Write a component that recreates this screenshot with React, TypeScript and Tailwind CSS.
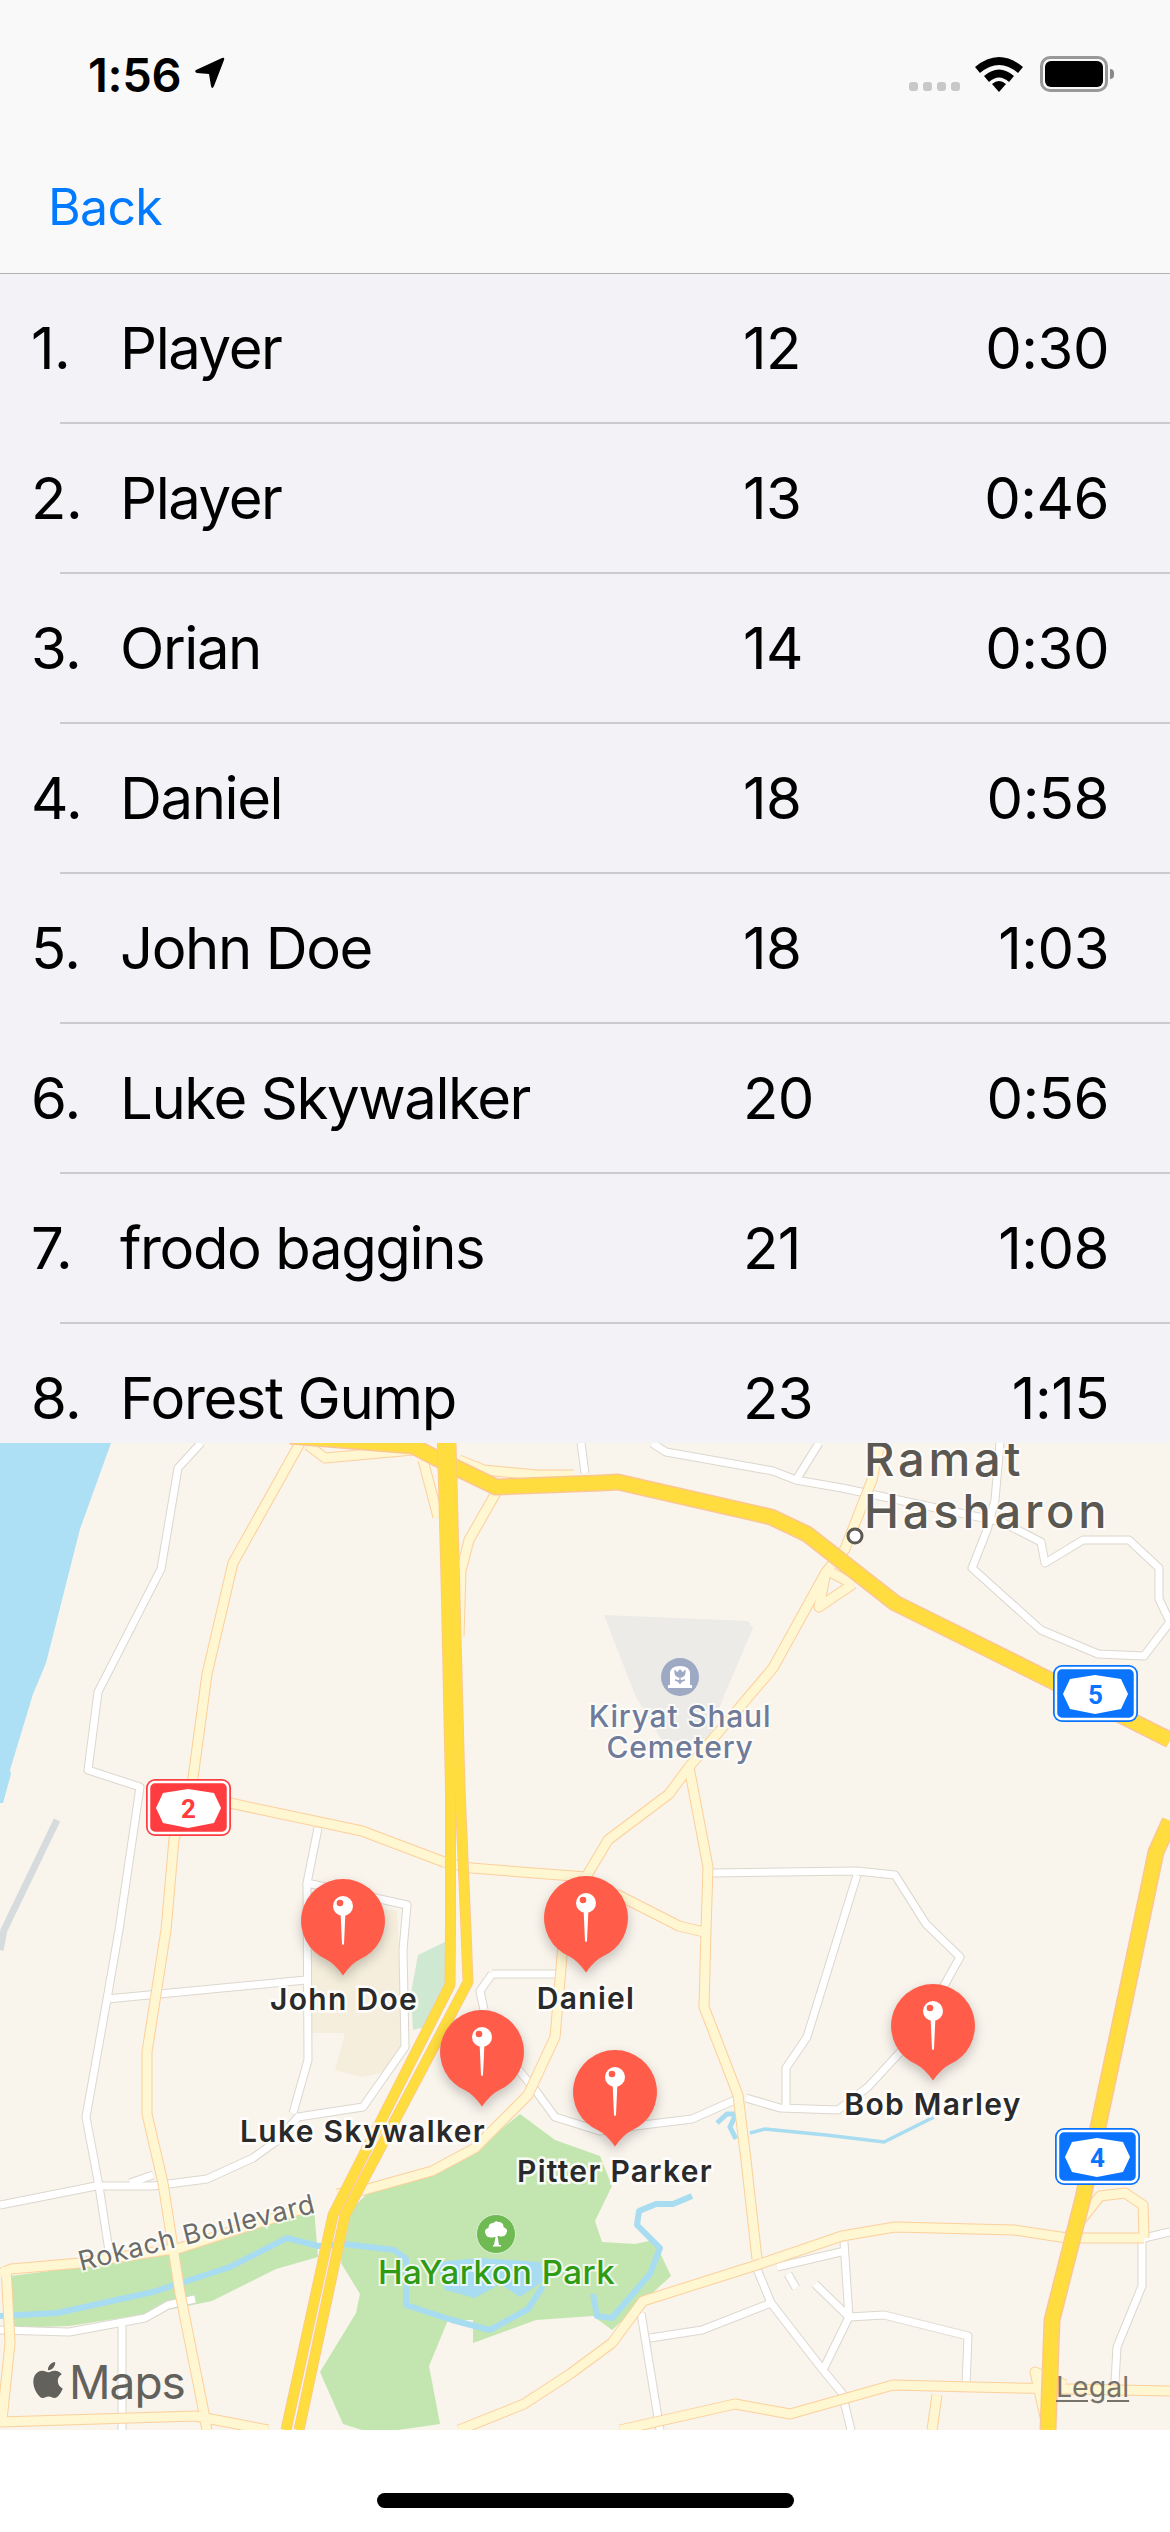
import { SiApple } from "react-icons/si";

interface Score {
  rank: number;
  name: string;
  moves: number;
  time: string;
}

const SCORES: Score[] = [
  { rank: 1, name: "Player", moves: 12, time: "0:30" },
  { rank: 2, name: "Player", moves: 13, time: "0:46" },
  { rank: 3, name: "Orian", moves: 14, time: "0:30" },
  { rank: 4, name: "Daniel", moves: 18, time: "0:58" },
  { rank: 5, name: "John Doe", moves: 18, time: "1:03" },
  { rank: 6, name: "Luke Skywalker", moves: 20, time: "0:56" },
  { rank: 7, name: "frodo baggins", moves: 21, time: "1:08" },
  { rank: 8, name: "Forest Gump", moves: 23, time: "1:15" },
];

const PINS = [
  { name: "John Doe", x: 343, y: 1879, labelX: 344, labelY: 1981 },
  { name: "Daniel", x: 586, y: 1876, labelX: 586, labelY: 1980 },
  { name: "Luke Skywalker", x: 482, y: 2010, labelX: 363, labelY: 2113 },
  { name: "Pitter Parker", x: 615, y: 2050, labelX: 615, labelY: 2153 },
  { name: "Bob Marley", x: 933, y: 1984, labelX: 933, labelY: 2086 },
];

// all map geometry is in page pixels, the svg viewBox starts at the map's top edge
const WHITE_ROADS = [
  "201,1443 178,1468 161,1569 98,1692 88,1770 140,1787 119,1930 107,1999 86,2117 99,2186 109,2251",
  "107,1999 306,1980",
  "318,1828 307,1883 407,1905 403,1950 405,2047 363,2107 298,2117 278,2140 253,2158 207,2179 153,2186 96,2186 0,2205",
  "307,1883 308,2060 293,2113",
  "153,2175 130,2183",
  "0,2330 69,2332 145,2318 168,2305 195,2299",
  "122,2324 122,2430",
  "492,1974 563,1974",
  "492,1974 480,1991 484,2010",
  "517,2068 536,2091 555,2117 600,2131 643,2125 692,2119 735,2100",
  "746,2098 780,2108 838,2110 868,2087 903,2049 945,1984 960,1957 926,1924 895,1875 857,1871 712,1873",
  "857,1875 807,2037 786,2068 786,2108",
  "757,2269 771,2303 823,2370 842,2393 851,2430",
  "771,2303 702,2330 650,2338",
  "641,2313 660,2430",
  "777,2267 845,2251",
  "844,2242 849,2317 823,2370",
  "815,2284 849,2317 884,2315 968,2336 966,2385",
  "788,2274 796,2288",
  "1142,2240 1142,2286 1117,2347 1115,2382",
  "1144,2238 1170,2232",
  "652,1443 666,1452 773,1471 796,1480 842,1488 1002,1522 1041,1542 1045,1563 1083,1540 1129,1540 1159,1568 1159,1599 1170,1622 1144,1656 1098,1654 1041,1630 972,1568 987,1530 995,1500 1000,1443",
  "796,1480 819,1443",
  "581,1443 585,1473",
];

const SECONDARY_ROADS = [
  "300,1443 233,1563 207,1674 193,1778 174,1839 166,1930 147,2052 147,2114 163,2183 180,2293 203,2408 207,2430",
  "230,1803 362,1831 444,1862 471,1868 586,1877 608,1840 669,1794 689,1767 773,1668 826,1572 845,1549 872,1480 880,1443",
  "689,1767 708,1867 706,1930 704,2007 738,2095 746,2160 757,2259",
  "459,2430 524,2404 570,2374 612,2343 643,2301 757,2265 842,2236 895,2227 1014,2230 1067,2238 1144,2238",
  "620,2430 735,2404 790,2414 893,2385 972,2387 1170,2391",
  "937,2395 932,2430",
  "337,2194 364,2190 432,2171 475,2148 528,2095 555,2037 561,1968 564,1930",
  "616,1894 679,1926 704,1932",
  "0,2274 11,2269 80,2263 180,2248 314,2205",
  "0,2422 195,2416 268,2430",
  "6,2267 10,2343 2,2420",
  "308,1445 325,1458 413,1450",
  "423,1460 438,1517",
  "497,1491 469,1540 461,1571 459,1636",
  "459,1460 484,1470 536,1475 574,1475",
  "826,1572 819,1607 853,1584",
  "830,1572 853,1584",
  "1067,2238 1100,2196 1125,2193 1143,2205 1144,2238",
  "1065,2385 1035,2372 1048,2430",
];

const MOTORWAYS = [
  "290,1436 413,1446 436,1458 496,1487 600,1483 618,1482 771,1517 807,1534 895,1603 1048,1679 1170,1740",
  "1170,1821 1156,1852 1125,2000 1083,2198 1052,2320 1048,2430",
];

const TWIN_LANES = [
  "442.500,1443 446.500,1598 450.500,1789 450.500,1930 450,1985 333,2215 286,2430",
  "451,1443 455,1598 460,1789 466,1930 468,1982 345,2215 299,2430",
];

const RIVERS = [
  "0,2316 57,2313 153,2292 230,2267 287,2238 318,2246 344,2244 394,2250 406,2259 406,2305 452,2320 490,2330 528,2309 543,2286",
  "593,2294 597,2316 612,2318 650,2274 660,2248 637,2225 639,2211 656,2204 673,2204 692,2196",
];

function Polylines({ items, color, width }: { items: string[]; color: string; width: number }) {
  return (
    <>
      {items.map((points, i) => (
        <polyline key={i} points={points} fill="none" stroke={color} strokeWidth={width} strokeLinejoin="round" />
      ))}
    </>
  );
}

function Shield({ x, y, color, label }: { x: number; y: number; color: string; label: string }) {
  return (
    <g transform={`translate(${x} ${y})`}>
      <rect width="85" height="57" rx="9" fill={color} />
      <rect x="3" y="3" width="79" height="51" rx="6" fill="none" stroke="#fff" strokeWidth="2.5" />
      <polygon points="10,29 17,14 42,10 68,14 75,29 68,44 42,49 17,44" fill="#fff" />
      <text x="42.5" y="39" textAnchor="middle" fontSize="26" fontWeight="700" fill={color} fontFamily="Roboto, sans-serif">{label}</text>
    </g>
  );
}

function MapLabel({ x, y, size, color, weight, anchor, spacing, children }: { x: number; y: number; size: number; color: string; weight: number; anchor?: "start" | "middle"; spacing?: number; children: string }) {
  return (
    <text x={x} y={y} fontSize={size} fill={color} fontWeight={weight} textAnchor={anchor ?? "start"} stroke="#fff" strokeOpacity="0.75" strokeWidth="4" paintOrder="stroke" fontFamily="Inter, sans-serif" letterSpacing={spacing ?? 0.8}>
      {children}
    </text>
  );
}

function BaseMap() {
  return (
    <svg viewBox="0 1443 1170 987" className="block w-full h-full">
      <rect x="0" y="1443" width="1170" height="987" fill="#f9f4ec" />
      <polygon points="0,1443 111,1443 80,1529 46,1663 33,1694 10,1770 11,1774 3,1803 0,1803" fill="#ade0f5" />
      <polygon points="11,2276 80,2267 180,2250 314,2209 318,2257 276,2269 212,2301 153,2313 69,2326 11,2328" fill="#c3e6b0" />
      <polygon points="367,2194 432,2171 478,2148 520,2114 555,2140 600,2156 612,2186 595,2221 602,2242 635,2244 654,2240 671,2276 612,2330 593,2316 536,2320 473,2343 473,2320 448,2320 429,2366 440,2424 398,2430 362,2430 343,2424 320,2372 356,2313 360,2294 341,2263 345,2215" fill="#c3e6b0" />
      <polygon points="445,1942 418,1955 411,1993 413,2030 432,2025 445,1995" fill="#cfe8d2" />
      <polygon points="312,1905 397,1910 400,1970 405,2047 387,2072 362,2077 335,2070 345,2033 312,2033" fill="#f5eedd" />
      <polygon points="604,1615 748,1621 753,1628 723,1698 708,1741 662,1741 635,1695" fill="#ecebe7" />

      <Polylines items={RIVERS} color="#a8dcf0" width={6} />
      <polygon points="436,2262 480,2258 540,2262 545,2280 520,2297 500,2284 475,2298 445,2290" fill="#a8dcf0" />
      <polyline points="717,2123 727,2114 736,2114 730,2127 736,2139" fill="none" stroke="#a8dcf0" strokeWidth="5" />
      <polyline points="750,2133 765,2129 826,2135 884,2142 934,2117" fill="none" stroke="#a8dcf0" strokeWidth="3.5" />
      <polyline points="57,1820 4,1930 0,1950" fill="none" stroke="#d6dbdd" strokeWidth="7" />

      <Polylines items={WHITE_ROADS} color="#dcd7cf" width={9} />
      <Polylines items={WHITE_ROADS} color="#ffffff" width={7} />
      <Polylines items={SECONDARY_ROADS} color="#fcd09c" width={11} />
      <Polylines items={SECONDARY_ROADS} color="#fff6d2" width={9} />
      <Polylines items={MOTORWAYS} color="#fcc692" width={17} />
      <Polylines items={MOTORWAYS} color="#ffdd3e" width={14} />
      <Polylines items={TWIN_LANES} color="#fcc692" width={11} />
      <Polylines items={TWIN_LANES} color="#ffdd3e" width={9.5} />

      <circle cx="855" cy="1536" r="7" fill="#fff" stroke="#5a5850" strokeWidth="3" />
      <MapLabel x={864} y={1476} size={47} color="#5a5850" weight={500} spacing={3.8}>Ramat</MapLabel>
      <MapLabel x={864} y={1528} size={47} color="#5a5850" weight={500} spacing={3.8}>Hasharon</MapLabel>

      <circle cx="680" cy="1677" r="19" fill="#9eaac4" />
      <path d="M668 1688 v-3 h2 v-11 q0 -8 10 -8 q10 0 10 8 v11 h2 v3 z" fill="#fff" />
      <path d="M680 1684 v-7 M675 1671 q0 6 5 6 q5 0 5 -6 l-2.5 2 l-2.5 -3 l-2.5 3 z M675 1680 q3 0 5 3 q2 -3 5 -3" fill="#9eaac4" stroke="#9eaac4" strokeWidth="1.4" />
      <MapLabel x={680} y={1727} size={30} color="#6f7b99" weight={500} anchor="middle">Kiryat Shaul</MapLabel>
      <MapLabel x={680} y={1758} size={30} color="#6f7b99" weight={500} anchor="middle">Cemetery</MapLabel>

      <circle cx="496" cy="2234" r="19.5" fill="#6fba53" stroke="#d9efcf" strokeWidth="1" />
      <path d="M494 2245 l1.5 -8 h-1 q-7 2 -9 -3 q-2 -5 3 -6 q0 -5 5 -5 q2 -3 5 -1 q5 0 5 5 q5 2 3 6 q-2 5 -8 3 h-1 l1.500 9 h2 v1.500 h-8 v-1.500 z" fill="#fff" />
      <MapLabel x={378} y={2284} size={33} color="#2f9b12" weight={500} spacing={0.5}>HaYarkon Park</MapLabel>

      <g transform="translate(81 2271) rotate(-14)">
        <MapLabel x={0} y={0} size={27} color="#6b6b68" weight={400}>Rokach Boulevard</MapLabel>
      </g>

      <Shield x={146} y={1779} color="#ff3d41" label="2" />
      <Shield x={1053} y={1665} color="#0a74ff" label="5" />
      <Shield x={1055} y={2128} color="#0a74ff" label="4" />
    </svg>
  );
}

function MapPin({ name, x, y, labelX, labelY }: { name: string; x: number; y: number; labelX: number; labelY: number }) {
  return (
    <>
      <svg width="100" height="112" viewBox="0 0 100 112" className="absolute drop-shadow-[0_5px_6px_rgba(0,0,0,0.22)]" style={{ left: x - 50, top: y - 1443 - 6 }}>
        <path d="M50 6 a42 42 0 0 1 16.500 80.600 q-8 4 -16.500 15.900 q-8.500 -11.900 -16.500 -15.900 a42 42 0 0 1 16.500 -80.600 z" fill="#ff5c49" />
        <circle cx="50" cy="33" r="10" fill="#fff" />
        <circle cx="47" cy="30" r="3.300" fill="#ff5c49" />
        <path d="M47.500 38 h5 l-1.500 33 q-1 2 -2 0 z" fill="#fff" />
      </svg>
      <div
        className="absolute -translate-x-1/2 whitespace-nowrap font-['Inter',sans-serif] text-[30px] leading-[36px] font-semibold tracking-[1.3px] text-[#2a2a2a] [paint-order:stroke_fill] [-webkit-text-stroke:5px_rgba(255,255,255,0.9)]"
        style={{ left: labelX, top: labelY - 1443 }}
      >
        {name}
      </div>
    </>
  );
}

function StatusBar() {
  return (
    <div className="flex items-end justify-between h-[97px] pl-[88px] pr-[62px]">
      <div className="flex items-end gap-[13px]">
        <span className="font-['Inter',sans-serif] text-[47px] leading-[44px] font-semibold text-black tracking-[-0.3px]">1:56</span>
        <svg width="31" height="32" viewBox="0 0 31 32" className="mb-[8px]">
          <path d="M2 13 L28 1 Q31 0 30 3 L20 29 Q18 33 17 29 L15 17 L3 16 Q0 15 2 13 Z" fill="#000" />
        </svg>
      </div>
      <div className="flex items-end mb-[5px]">
        <div className="flex gap-[5px] mb-[1px]">
          {[0, 1, 2, 3].map((d) => <div key={d} className="w-[9px] h-[9px] rounded-[3px] bg-[#c8c8c8]" />)}
        </div>
        <svg width="48" height="36" viewBox="0 0 48 36" className="ml-[15px]">
          <path d="M0 11 Q24 -9 48 11 L43 17 Q24 1 5 17 Z M9 20 Q24 7 39 20 L34 26 Q24 17 14 26 Z M17 28 Q24 22 31 28 L24 36 Z" fill="#000" />
        </svg>
        <div className="relative ml-[17px] w-[68px] h-[36px] rounded-[10px] border-[3px] border-[#999999] p-[2px]">
          <div className="w-full h-full rounded-[6px] bg-black" />
          <div className="absolute left-[67px] top-[10px] w-[4px] h-[10px] rounded-r-[4px] bg-[#8a8a8a]" />
        </div>
      </div>
    </div>
  );
}

export default function App() {
  return (
    <div className="w-[1170px] h-[2532px] flex flex-col bg-white font-['Inter',sans-serif] overflow-hidden">
      <header className="h-[274px] shrink-0 bg-[#f9f9f9] border-b border-[#b2b2b2]">
        <StatusBar />
        <div className="pl-[48px] pt-[80px] text-[50px] leading-[60px] text-[#007aff] tracking-[-0.7px]">Back</div>
      </header>

      <div className="h-[1169px] shrink-0 overflow-hidden bg-[#f2f2f7]">
        {SCORES.map((s) => (
          <div key={s.rank}>
            <div className="flex items-center h-[148px] pl-[31px] pr-[61px] text-[58px] leading-[68px] text-black tracking-[-0.5px]">
              <span className="w-[89px] shrink-0">{s.rank}.</span>
              <span className="flex-1 whitespace-nowrap tracking-[-1.4px]">{s.name}</span>
              <span className="w-[206px] shrink-0">{s.moves}</span>
              <span className="w-[160px] shrink-0 text-right">{s.time}</span>
            </div>
            <div className="ml-[60px] h-[2px] bg-[#cbcace]" />
          </div>
        ))}
      </div>

      <div className="relative h-[987px] shrink-0 overflow-hidden">
        <BaseMap />
        {PINS.map((p) => <MapPin key={p.name} {...p} />)}
        <div className="absolute left-[30px] bottom-[18px] flex items-end gap-[3px] text-[#62615c]">
          <SiApple className="w-[36px] h-[42px] mb-[11px]" />
          <span className="text-[46px] leading-[60px] tracking-[-1px]">Maps</span>
        </div>
        <div className="absolute left-[1056px] bottom-[27px] text-[28.500px] leading-[32px] text-[#77736b] underline underline-offset-[3px]">Legal</div>
      </div>

      <div className="flex-1 flex items-end justify-center pb-[24px]">
        <div className="w-[417px] h-[15px] rounded-full bg-black" />
      </div>
    </div>
  );
}
